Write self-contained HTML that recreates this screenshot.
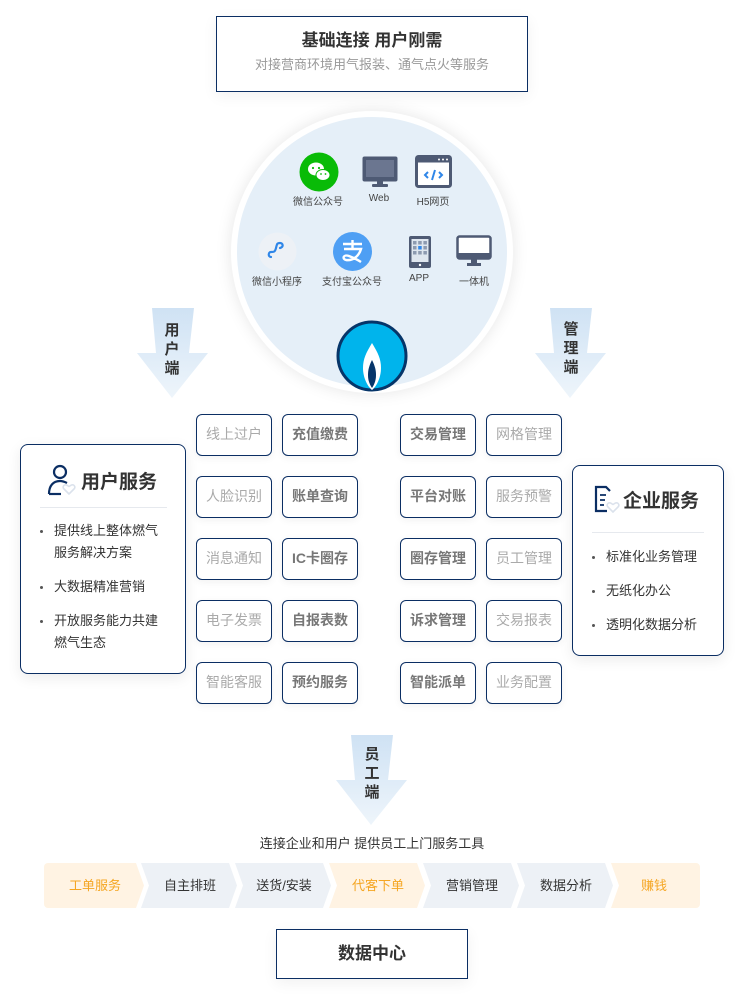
<!DOCTYPE html>
<html><head><meta charset="utf-8"><style>
*{margin:0;padding:0;box-sizing:border-box}
body{width:744px;height:1003px;background:#fff;position:relative;overflow:hidden;font-family:"Liberation Sans","Noto Sans CJK SC",sans-serif;color:#333}
.abs{position:absolute}
.top{left:216px;top:16px;width:312px;height:76px;border:1.5px solid #0b2e63;background:#fff;box-shadow:0 4px 14px rgba(0,0,0,.06);text-align:center}
.top b{display:block;font-size:17px;line-height:20px;margin-top:14px;color:#333}
.top span{display:block;font-size:13px;line-height:16px;color:#999;margin-top:6px}
.circle{left:231px;top:111px;width:282px;height:282px;border-radius:50%;background:#fff;box-shadow:0 0 16px rgba(0,0,0,.1)}
.inner{left:237px;top:117px;width:270px;height:270px;border-radius:50%;background:#e5eff8}
.lbl{font-size:10px;color:#444;text-align:center;width:80px}
.btn{width:76px;height:42px;border:1.5px solid #0b2e63;border-radius:6px;background:#fff;font-size:14px;text-align:center;line-height:39px;box-shadow:0 2px 8px rgba(0,0,0,.06)}
.g{color:#aaa}.d{color:#777;font-weight:bold}
.panel{border:1.5px solid #0b2e63;border-radius:8px;background:#fff;box-shadow:0 4px 14px rgba(0,0,0,.08)}
.panel h3{font-size:19px;color:#333}
.panel ul{list-style:none;font-size:13px;color:#333;line-height:22px}
.panel li{position:relative;padding-left:20px;margin-bottom:12px}
.panel li:before{content:"";position:absolute;left:6px;top:10px;width:3px;height:3px;border-radius:50%;background:#555}
.arrtxt{font-size:15px;font-weight:bold;color:#333;width:20px;text-align:center;line-height:19px}
.seg{top:863px;height:45px;font-size:13px;text-align:center;line-height:45px}
</style></head><body>
<div class="abs top"><b>基础连接 用户刚需</b><span>对接营商环境用气报装、通气点火等服务</span></div>

<div class="abs circle"></div>
<div class="abs inner"></div>
<svg class="abs" style="left:299px;top:152px" width="40" height="40" viewBox="0 0 40 40"><circle cx="20" cy="20" r="19.5" fill="#09bb07"/><ellipse cx="17" cy="17" rx="8" ry="6.5" fill="#fff"/><ellipse cx="24" cy="23" rx="7" ry="5.5" fill="#fff" stroke="#09bb07" stroke-width="1"/><circle cx="14" cy="16" r="1.1" fill="#09bb07"/><circle cx="20" cy="16" r="1.1" fill="#09bb07"/><circle cx="22" cy="22" r=".9" fill="#09bb07"/><circle cx="26.5" cy="22" r=".9" fill="#09bb07"/></svg>
<svg class="abs" style="left:361px;top:155px" width="38" height="33" viewBox="0 0 38 33"><rect x="1.5" y="1.5" width="35" height="25" rx="2" fill="#4e5a74"/><rect x="5" y="5" width="28" height="17" fill="#6b7690"/><rect x="16" y="26" width="6" height="4" fill="#4e5a74"/><rect x="11" y="29" width="16" height="3" rx="1" fill="#4e5a74"/></svg>
<svg class="abs" style="left:415px;top:155px" width="37" height="33" viewBox="0 0 37 33"><rect x="1.5" y="1.5" width="34" height="30" rx="2" fill="#fff" stroke="#4e5a74" stroke-width="3"/><rect x="1.5" y="1.5" width="34" height="6" fill="#4e5a74"/><circle cx="24" cy="4.5" r="1" fill="#fff"/><circle cx="28" cy="4.5" r="1" fill="#fff"/><circle cx="32" cy="4.5" r="1" fill="#fff"/><path d="M13 17l-3 3 3 3M24 17l3 3-3 3M20 15l-3 10" stroke="#2f86e8" stroke-width="2" fill="none"/></svg>
<div class="abs lbl" style="left:278px;top:193px">微信公众号</div>
<div class="abs lbl" style="left:339px;top:193px">Web</div>
<div class="abs lbl" style="left:393px;top:193px">H5网页</div>
<svg class="abs" style="left:258px;top:232px" width="39" height="39" viewBox="0 0 39 39"><circle cx="19.5" cy="19.5" r="19" fill="#edf1f6"/><path d="M13 25c-3 0-3-5 0-5s4 0 5-4 1-5 4-5 4 4 0 5" stroke="#2f86e8" stroke-width="2.2" fill="none" stroke-linecap="round"/></svg>
<svg class="abs" style="left:333px;top:232px" width="39" height="39" viewBox="0 0 39 39"><circle cx="19.5" cy="19.5" r="19.5" fill="#4e9ff4"/><path d="M10 12h19M19.5 8v9M11 17h17c-2 7-8 12-15 11-4-1-3-6 3-4 5 2 9 4 12 6" stroke="#fff" stroke-width="2.4" fill="none"/></svg>
<svg class="abs" style="left:408px;top:235px" width="24" height="34" viewBox="0 0 24 34"><rect x="1" y="1" width="22" height="32" rx="2" fill="#4e5a74"/><rect x="3.5" y="4" width="17" height="23" fill="#dfe6ef"/><g fill="#8d9ab0"><rect x="5" y="6" width="3.5" height="3.5"/><rect x="10.2" y="6" width="3.5" height="3.5"/><rect x="15.4" y="6" width="3.5" height="3.5"/><rect x="5" y="11" width="3.5" height="3.5"/><rect x="15.4" y="11" width="3.5" height="3.5"/><rect x="5" y="16" width="3.5" height="3.5"/><rect x="10.2" y="16" width="3.5" height="3.5"/><rect x="15.4" y="16" width="3.5" height="3.5"/></g><rect x="10.2" y="11" width="3.5" height="3.5" fill="#2f86e8"/><circle cx="12" cy="30" r="1.2" fill="#fff"/></svg>
<svg class="abs" style="left:456px;top:235px" width="36" height="33" viewBox="0 0 36 33"><rect x="1.5" y="1.5" width="33" height="22" rx="2" fill="#fff" stroke="#4e5a74" stroke-width="2.5"/><rect x="1.5" y="18" width="33" height="5.5" fill="#4e5a74"/><rect x="15" y="24" width="6" height="5" fill="#4e5a74"/><rect x="11" y="28" width="14" height="3" fill="#4e5a74"/></svg>
<div class="abs lbl" style="left:237px;top:273px">微信小程序</div>
<div class="abs lbl" style="left:312px;top:273px">支付宝公众号</div>
<div class="abs lbl" style="left:379px;top:273px">APP</div>
<div class="abs lbl" style="left:434px;top:273px">一体机</div>
<svg class="abs" style="left:336px;top:320px" width="72" height="72" viewBox="0 0 72 72"><circle cx="36" cy="36" r="34" fill="#00b4ec" stroke="#063569" stroke-width="3"/><path d="M36 23c-6 10-9 16-9 25 0 9 4 18 9 22 5-4 9-13 9-22 0-9-3-15-9-25z" fill="#fff"/><path d="M36 40c-3 6-4 10-4 15 0 6 2 10 4 13 2-3 4-7 4-13 0-5-1-9-4-15z" fill="#063569"/></svg>

<svg class="abs" style="left:0;top:0" width="744" height="1003"><defs><linearGradient id="ag" x1="0" y1="0" x2="0" y2="1"><stop offset="0" stop-color="#cfe2f4"/><stop offset="1" stop-color="#eef5fb"/></linearGradient></defs>
<path d="M152 308h42l-5 45h19l-36 45-35-45h19z" fill="url(#ag)"/>
<path d="M550 308h42l-5 45h19l-36 45-35-45h19z" fill="url(#ag)"/>
<path d="M351 735h42l-5 45h19l-36 45-35-45h19z" fill="url(#ag)"/></svg>
<div class="abs arrtxt" style="left:162px;top:321px">用<br>户<br>端</div>
<div class="abs arrtxt" style="left:561px;top:320px">管<br>理<br>端</div>
<div class="abs arrtxt" style="left:362px;top:745px">员<br>工<br>端</div>

<div class="abs panel" style="left:20px;top:444px;width:166px;height:230px">
<svg class="abs" style="left:25px;top:19px" width="32" height="32" viewBox="0 0 32 32"><circle cx="14" cy="8" r="6" fill="none" stroke="#0b2e63" stroke-width="2.2"/><path d="M3 30c0-8 4-13 11-13 3 0 5 1 7 2" fill="none" stroke="#0b2e63" stroke-width="2.2"/><path d="M3 30h12" stroke="#0b2e63" stroke-width="2.2"/><path d="M23 30l-5-5c-2-2 0-5 2.5-4l2.5 1.5 2.5-1.5c2.5-1 4.5 2 2.5 4z" fill="#fff" stroke="#dbe2ec" stroke-width="1.6"/></svg>
<h3 class="abs" style="left:60px;top:22px">用户服务</h3>
<div class="abs" style="left:19px;top:62px;width:127px;height:1px;background:#e6e9ee"></div>
<ul class="abs" style="left:13px;top:75px;width:130px"><li>提供线上整体燃气服务解决方案</li><li>大数据精准营销</li><li>开放服务能力共建燃气生态</li></ul>
</div>

<div class="abs btn g" style="left:196px;top:414px">线上过户</div><div class="abs btn d" style="left:282px;top:414px">充值缴费</div>
<div class="abs btn g" style="left:196px;top:476px">人脸识别</div><div class="abs btn d" style="left:282px;top:476px">账单查询</div>
<div class="abs btn g" style="left:196px;top:538px">消息通知</div><div class="abs btn d" style="left:282px;top:538px">IC卡圈存</div>
<div class="abs btn g" style="left:196px;top:600px">电子发票</div><div class="abs btn d" style="left:282px;top:600px">自报表数</div>
<div class="abs btn g" style="left:196px;top:662px">智能客服</div><div class="abs btn d" style="left:282px;top:662px">预约服务</div>

<div class="abs btn d" style="left:400px;top:414px">交易管理</div><div class="abs btn g" style="left:486px;top:414px">网格管理</div>
<div class="abs btn d" style="left:400px;top:476px">平台对账</div><div class="abs btn g" style="left:486px;top:476px">服务预警</div>
<div class="abs btn d" style="left:400px;top:538px">圈存管理</div><div class="abs btn g" style="left:486px;top:538px">员工管理</div>
<div class="abs btn d" style="left:400px;top:600px">诉求管理</div><div class="abs btn g" style="left:486px;top:600px">交易报表</div>
<div class="abs btn d" style="left:400px;top:662px">智能派单</div><div class="abs btn g" style="left:486px;top:662px">业务配置</div>

<div class="abs panel" style="left:572px;top:465px;width:152px;height:191px">
<svg class="abs" style="left:20px;top:19px" width="28" height="28" viewBox="0 0 28 28"><path d="M14 26H3V2h10l4 4" fill="none" stroke="#0b2e63" stroke-width="2.2"/><path d="M7 10h6M7 15h5M7 20h4" stroke="#0b2e63" stroke-width="1.8"/><path d="M20 27l-5-5c-2-2 0-5 2.5-4l2.5 1.5 2.5-1.5c2.5-1 4.5 2 2.5 4z" fill="#fff" stroke="#dbe2ec" stroke-width="1.6"/></svg>
<h3 class="abs" style="left:50px;top:20px">企业服务</h3>
<div class="abs" style="left:19px;top:66px;width:112px;height:1px;background:#e6e9ee"></div>
<ul class="abs" style="left:13px;top:80px;width:140px"><li>标准化业务管理</li><li>无纸化办公</li><li>透明化数据分析</li></ul>
</div>

<div class="abs" style="left:0;top:833px;width:744px;text-align:center;font-size:13px;color:#333">连接企业和用户 提供员工上门服务工具</div>

<svg class="abs" style="left:44px;top:863px" width="656" height="45" viewBox="0 0 656 45">
<path d="M4 0h88l8 22.5-8 22.5H4a4 4 0 0 1-4-4V4a4 4 0 0 1 4-4z" fill="#fff3e3"/>
<path d="M97 0h88l8 22.5-8 22.5H97l8-22.5z" fill="#edf1f6"/>
<path d="M191 0h88l8 22.5-8 22.5H191l8-22.5z" fill="#edf1f6"/>
<path d="M285 0h88l8 22.5-8 22.5H285l8-22.5z" fill="#fff3e3"/>
<path d="M379 0h88l8 22.5-8 22.5H379l8-22.5z" fill="#edf1f6"/>
<path d="M473 0h88l8 22.5-8 22.5H473l8-22.5z" fill="#edf1f6"/>
<path d="M567 0h85a4 4 0 0 1 4 4v37a4 4 0 0 1-4 4h-85l8-22.5z" fill="#fff3e3"/>
</svg>
<div class="abs seg" style="left:44px;width:102px;color:#f5a623">工单服务</div>
<div class="abs seg" style="left:139px;width:102px;color:#333">自主排班</div>
<div class="abs seg" style="left:233px;width:102px;color:#333">送货/安装</div>
<div class="abs seg" style="left:327px;width:102px;color:#f5a623">代客下单</div>
<div class="abs seg" style="left:421px;width:102px;color:#333">营销管理</div>
<div class="abs seg" style="left:515px;width:102px;color:#333">数据分析</div>
<div class="abs seg" style="left:609px;width:90px;color:#f5a623">赚钱</div>

<div class="abs" style="left:276px;top:929px;width:192px;height:50px;border:1.5px solid #0b2e63;background:#fff;box-shadow:0 4px 14px rgba(0,0,0,.06);text-align:center;line-height:47px;font-size:17px;font-weight:bold;color:#333">数据中心</div>
</body></html>
